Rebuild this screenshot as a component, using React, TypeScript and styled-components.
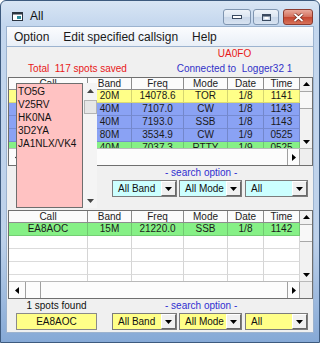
import React from "react";
import styled, { createGlobalStyle } from "styled-components";

const GlobalStyle = createGlobalStyle`
  html, body {
    margin: 0;
    padding: 0;
  }
  body {
    width: 320px;
    height: 343px;
    overflow: hidden;
    background: #fff;
    font-family: "Liberation Sans", Arial, sans-serif;
  }
`;

type Spot = {
  call: string;
  band: string;
  freq: string;
  mode: string;
  date: string;
  time: string;
  color: string;
};

const YELLOW = "#ffff88";
const BLUE = "#8aa2f4";
const GREEN = "#86f086";
const COLS = "79px 44px 52px 44px 36px 36px";

const upperSpots: Spot[] = [
  { call: "TO5G", band: "20M", freq: "14078.6", mode: "TOR", date: "1/8", time: "1141", color: YELLOW },
  { call: "V25RV", band: "40M", freq: "7107.0", mode: "CW", date: "1/8", time: "1143", color: BLUE },
  { call: "HK0NA", band: "40M", freq: "7193.0", mode: "SSB", date: "1/8", time: "1143", color: BLUE },
  { call: "3D2YA", band: "80M", freq: "3534.9", mode: "CW", date: "1/9", time: "0525", color: BLUE },
  { call: "JA1NLX/VK4", band: "40M", freq: "7037.3", mode: "RTTY", date: "1/9", time: "0525", color: GREEN },
];

const foundSpots: Spot[] = [
  { call: "EA8AOC", band: "15M", freq: "21220.0", mode: "SSB", date: "1/8", time: "1142", color: GREEN },
];

// window chrome
const Frame = styled.div`
  box-sizing: border-box;
  width: 320px;
  height: 343px;
  display: flex;
  flex-direction: column;
  border: 1px solid #3d5a7e;
  border-radius: 6px 6px 0 0;
  background: linear-gradient(#d8e5f4 0px, #c4d7ee 24px, #bdd1ea 70%, #86a9d6 100%);
  padding: 0 6px 10px;
`;

const TitleBar = styled.div`
  height: 26px;
  display: flex;
  align-items: flex-start;
`;

const TitleIcon = styled.svg`
  margin: 11px 0 0 5px;
`;

const TitleText = styled.div`
  margin: 8px 0 0 7px;
  font-size: 12px;
  line-height: 15px;
  color: #111;
`;

const CaptionButtons = styled.div`
  margin-left: auto;
  margin-top: 8px;
  display: flex;
`;

const CaptionButton = styled.div<{ $w: number; $close?: boolean; $gap?: number }>`
  box-sizing: border-box;
  width: ${(p) => p.$w}px;
  height: 16px;
  margin-left: ${(p) => p.$gap ?? 0}px;
  border-radius: 3px;
  border: 1px solid ${(p) => (p.$close ? "#8c3b2f" : "#7f95b0")};
  background: ${(p) =>
    p.$close
      ? "linear-gradient(#e9a99b, #d3705d 50%, #c5452f 51%, #d7725a)"
      : "linear-gradient(#eef3f9, #dbe5f1 50%, #c9d7e9 51%, #d8e3f1)"};
  display: flex;
  align-items: center;
  justify-content: center;
`;

const MenuBar = styled.div`
  height: 19px;
  display: flex;
  align-items: center;
  background: linear-gradient(#fbfcfe, #e9eff7);
  border-bottom: 1px solid #dce4ee;
  box-shadow: 0 0 0 1px #9cb3cf;
`;

const MenuItem = styled.div`
  padding: 0 7px;
  font-size: 12px;
  color: #1a1a1a;
`;

const Content = styled.div`
  position: relative;
  flex: 1;
  display: flex;
  flex-direction: column;
  background: #f0f0f0;
  box-shadow: 0 0 0 1px #9cb3cf;
  font-size: 10px;
  color: #111;
`;

// status labels
const StatusRow = styled.div<{ $h: number }>`
  display: grid;
  grid-template-columns: 141px 1fr;
  height: ${(p) => p.$h}px;
  align-items: center;
`;

const StatusText = styled.div<{ $color: string; $right?: boolean }>`
  text-align: center;
  white-space: pre;
  color: ${(p) => p.$color};
  padding-left: ${(p) => (p.$right ? 8 : 0)}px;
`;

// grid
const GridBox = styled.div<{ $top: number }>`
  box-sizing: border-box;
  margin: ${(p) => p.$top}px 0 0 1px;
  width: 305px;
  height: 89px;
  border: 1px solid #6f6f6f;
  background: #fff;
  display: flex;
  flex-direction: column;
`;

const GridMain = styled.div`
  display: flex;
  height: 70px;
`;

const Table = styled.div`
  width: 291px;
  overflow: hidden;
`;

const HeadRow = styled.div`
  display: grid;
  grid-template-columns: ${COLS};
  height: 12px;
`;

const HeadCell = styled.div`
  box-sizing: border-box;
  border-right: 1px solid #8d8d8d;
  border-bottom: 1px solid #8d8d8d;
  background: #fbfbfb;
  text-align: center;
  line-height: 11px;
  color: #222;
`;

const Row = styled.div<{ $h: number; $bg: string }>`
  display: grid;
  grid-template-columns: ${COLS};
  height: ${(p) => p.$h}px;
  background: ${(p) => p.$bg};
`;

const Cell = styled.div`
  box-sizing: border-box;
  border-right: 1px solid rgba(0, 0, 0, 0.16);
  border-bottom: 1px solid rgba(0, 0, 0, 0.14);
  text-align: center;
  line-height: 12px;
  white-space: nowrap;
  overflow: hidden;
  color: #1a1a1a;
`;

const VScroll = styled.div`
  width: 12px;
  display: flex;
  flex-direction: column;
  background: #f2f2f2;
`;

const ArrowSlot = styled.div<{ $h: number }>`
  height: ${(p) => p.$h}px;
  display: flex;
  align-items: center;
  justify-content: center;
  flex-shrink: 0;
`;

const VThumb = styled.div<{ $top: number; $h: number }>`
  box-sizing: border-box;
  margin-top: ${(p) => p.$top}px;
  height: ${(p) => p.$h}px;
  border-top: 1px solid #a8a8a8;
  border-bottom: 1px solid #a8a8a8;
  background: #f8f8f8;
`;

const Spacer = styled.div`
  flex: 1;
`;

const HScroll = styled.div`
  display: flex;
  height: 17px;
  border-top: 1px solid #b9b9b9;
  box-sizing: border-box;
  background: #fcfcfc;
`;

const HBox = styled.div<{ $w: number; $line?: "left" | "right" | "both" }>`
  box-sizing: border-box;
  width: ${(p) => p.$w}px;
  border-left: ${(p) => (p.$line === "left" || p.$line === "both" ? "1px solid #a0a0a0" : "none")};
  border-right: ${(p) => (p.$line === "right" || p.$line === "both" ? "1px solid #a0a0a0" : "none")};
  display: flex;
  align-items: center;
  justify-content: center;
`;

const Corner = styled.div`
  width: 12px;
  background: #eeeeee;
`;

// search area
const SearchArea = styled.div`
  display: flex;
  height: 31px;
`;

const LeftSlot = styled.div`
  width: 81px;
  margin-left: 9px;
  display: flex;
  flex-direction: column;
`;

const Panel = styled.div`
  margin-left: 15px;
  width: 196px;
  display: flex;
  flex-direction: column;
`;

const PanelLabel = styled.div`
  height: 13px;
  line-height: 13px;
  color: #2f2fd0;
  padding-left: 53px;
`;

const FoundLabel = styled.div`
  height: 13px;
  line-height: 13px;
  text-align: center;
  color: #111;
`;

const Selects = styled.div`
  margin-top: 1px;
  display: flex;
`;

const SelectBox = styled.div<{ $w: number; $bg: string; $gap: number }>`
  box-sizing: border-box;
  width: ${(p) => p.$w}px;
  height: 17px;
  margin-left: ${(p) => p.$gap}px;
  border: 1px solid #7c7c7c;
  background: ${(p) => p.$bg};
  display: flex;
  align-items: center;
`;

const SelectText = styled.div`
  flex: 1;
  padding-left: 5px;
  line-height: 15px;
`;

const DropButton = styled.div`
  box-sizing: border-box;
  width: 15px;
  height: 15px;
  background: #f0f0f0;
  border: 1px solid;
  border-color: #ffffff #696969 #696969 #ffffff;
  display: flex;
  align-items: center;
  justify-content: center;
`;

const CallBox = styled.div`
  margin-top: 1px;
  box-sizing: border-box;
  height: 17px;
  border: 1px solid #8a8a8a;
  background: #ffff88;
  text-align: center;
  line-height: 15px;
`;

// pink dropdown list over the call column
const ListDrop = styled.div`
  position: absolute;
  left: 9px;
  top: 36px;
  width: 81px;
  height: 125px;
  display: flex;
`;

const ListItems = styled.div`
  box-sizing: border-box;
  width: 67px;
  border: 1px solid #6e6e6e;
  background: #ffc2c2;
  padding: 1px 0 0 1px;
`;

const ListItem = styled.div`
  height: 13px;
  line-height: 13px;
  color: #111;
  white-space: nowrap;
`;

const ListScroll = styled.div`
  width: 14px;
  display: flex;
  flex-direction: column;
  background: #f4f4f4;
`;

const ListThumb = styled.div`
  box-sizing: border-box;
  margin: 2px 0 0 1px;
  height: 14px;
  border: 1px solid #b4b4b4;
  background: #e6e6e6;
`;

type Dir = "up" | "down" | "left" | "right";

const Arrow = ({ dir, color = "#000" }: { dir: Dir; color?: string }) => {
  const vertical = dir === "up" || dir === "down";
  const w = vertical ? 7 : 4;
  const h = vertical ? 4 : 7;
  const pts = {
    up: "0,4 7,4 3.5,0",
    down: "0,0 7,0 3.5,4",
    left: "4,0 4,7 0,3.5",
    right: "0,0 0,7 4,3.5",
  }[dir];
  return (
    <svg width={w} height={h} viewBox={`0 0 ${w} ${h}`}>
      <polygon points={pts} fill={color} />
    </svg>
  );
};

const headers = ["Call", "Band", "Freq", "Mode", "Date", "Time"];

const SpotGrid = ({
  spots,
  rowH,
  top,
  thumbTop,
  thumbH,
  hThumb,
  hideCall,
}: {
  spots: Spot[];
  rowH: number;
  top: number;
  thumbTop: number;
  thumbH: number;
  hThumb?: boolean;
  hideCall?: boolean;
}) => {
  const blanks = Math.max(0, 6 - spots.length);
  return (
    <GridBox $top={top}>
      <GridMain>
        <Table>
          <HeadRow>
            {headers.map((h) => (
              <HeadCell key={h}>{h}</HeadCell>
            ))}
          </HeadRow>
          {spots.map((s, i) => (
            <Row key={i} $h={rowH} $bg={s.color}>
              {/* call column sits under the list when it is open */}
              <Cell>{hideCall ? null : s.call}</Cell>
              <Cell>{s.band}</Cell>
              <Cell>{s.freq}</Cell>
              <Cell>{s.mode}</Cell>
              <Cell>{s.date}</Cell>
              <Cell>{s.time}</Cell>
            </Row>
          ))}
          {Array.from({ length: blanks }).map((_, i) => (
            <Row key={"b" + i} $h={rowH} $bg="#fff">
              {headers.map((h) => (
                <Cell key={h} />
              ))}
            </Row>
          ))}
        </Table>
        <VScroll>
          <ArrowSlot $h={12}>
            <Arrow dir="up" />
          </ArrowSlot>
          <VThumb $top={thumbTop} $h={thumbH} />
          <Spacer />
          <ArrowSlot $h={13}>
            <Arrow dir="down" />
          </ArrowSlot>
        </VScroll>
      </GridMain>
      <HScroll>
        <HBox $w={17} $line="right">
          <Arrow dir="left" />
        </HBox>
        {hThumb && <HBox $w={15} $line="right" />}
        <Spacer />
        <HBox $w={13} $line="both">
          <Arrow dir="right" />
        </HBox>
        <Corner />
      </HScroll>
    </GridBox>
  );
};

const Select = ({ label, w, bg, gap }: { label: string; w: number; bg: string; gap: number }) => (
  <SelectBox $w={w} $bg={bg} $gap={gap}>
    <SelectText>{label}</SelectText>
    <DropButton>
      <Arrow dir="down" />
    </DropButton>
  </SelectBox>
);

const SearchPanel = ({ bg }: { bg: string }) => (
  <Panel>
    <PanelLabel>- search option -</PanelLabel>
    <Selects>
      <Select label="All Band" w={65} bg={bg} gap={0} />
      <Select label="All Mode" w={63} bg={bg} gap={2} />
      <Select label="All" w={63} bg={bg} gap={3} />
    </Selects>
  </Panel>
);

const App = () => {
  return (
    <>
      <GlobalStyle />
      <Frame>
        <TitleBar>
          <TitleIcon width="11" height="9" viewBox="0 0 11 9">
            <rect x="0.5" y="0.5" width="10" height="8" fill="#fff" stroke="#2b3440" />
            <rect x="0.5" y="0.5" width="10" height="2" fill="#2b3440" />
            <rect x="5" y="4" width="4" height="3" fill="#2d8d9e" />
          </TitleIcon>
          <TitleText>All</TitleText>
          <CaptionButtons>
            <CaptionButton $w={28}>
              <svg width="10" height="4" viewBox="0 0 10 4">
                <rect x="0.5" y="0.5" width="9" height="3" fill="#fff" stroke="#3a4a60" />
              </svg>
            </CaptionButton>
            <CaptionButton $w={26} $gap={2}>
              <svg width="9" height="7" viewBox="0 0 9 7">
                <rect x="0.5" y="0.5" width="8" height="6" fill="none" stroke="#3a4a60" />
                <rect x="1" y="1" width="7" height="1.5" fill="#3a4a60" />
                <rect x="2.5" y="3" width="4" height="2" fill="#fff" />
              </svg>
            </CaptionButton>
            <CaptionButton $w={30} $gap={4} $close>
              <svg width="11" height="9" viewBox="0 0 11 9">
                <path d="M1.5 1 L9.5 8 M9.5 1 L1.5 8" stroke="#6b2418" strokeWidth="3.2" />
                <path d="M1.5 1 L9.5 8 M9.5 1 L1.5 8" stroke="#fff" strokeWidth="1.8" />
              </svg>
            </CaptionButton>
          </CaptionButtons>
        </TitleBar>
        <MenuBar>
          <MenuItem>Option</MenuItem>
          <MenuItem>Edit specified callsign</MenuItem>
          <MenuItem>Help</MenuItem>
        </MenuBar>
        <Content>
          <StatusRow $h={13}>
            <span />
            <StatusText $color="#e81818" $right>
              UA0FO
            </StatusText>
          </StatusRow>
          <StatusRow $h={16}>
            <StatusText $color="#e81818">{"Total  117 spots saved"}</StatusText>
            <StatusText $color="#3232c8" $right>
              {"Connected to  Logger32 1"}
            </StatusText>
          </StatusRow>

          <SpotGrid spots={upperSpots} rowH={13} top={1} thumbTop={1} thumbH={18} hideCall />

          <SearchArea>
            <LeftSlot />
            <SearchPanel bg="#ccffff" />
          </SearchArea>

          <SpotGrid spots={foundSpots} rowH={13} top={13} thumbTop={1} thumbH={18} hThumb />

          <SearchArea>
            <LeftSlot>
              <FoundLabel>1 spots found</FoundLabel>
              <CallBox>EA8AOC</CallBox>
            </LeftSlot>
            <SearchPanel bg="#ffff88" />
          </SearchArea>

          <ListDrop>
            <ListItems>
              {upperSpots.map((s) => (
                <ListItem key={s.call}>{s.call}</ListItem>
              ))}
            </ListItems>
            <ListScroll>
              <ArrowSlot $h={15}>
                <Arrow dir="up" color="#444" />
              </ArrowSlot>
              <ListThumb />
              <Spacer />
              <ArrowSlot $h={15}>
                <Arrow dir="down" color="#444" />
              </ArrowSlot>
            </ListScroll>
          </ListDrop>
        </Content>
      </Frame>
    </>
  );
};

export default App;
